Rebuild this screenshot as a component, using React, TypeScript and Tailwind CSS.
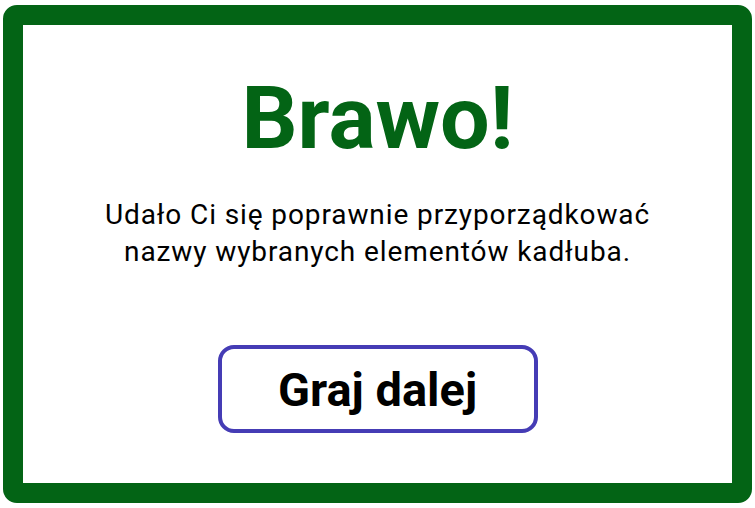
import React from 'react';

function App() {
  return (
    <div className="w-[755px] h-[508px] bg-white pl-[3px] pt-[5px]" style={{ fontFamily: 'Roboto, "Noto Sans", sans-serif' }}>
      <div className="w-[749px] h-[498px] border-[20px] border-[#036415] rounded-[14px] bg-white flex flex-col items-center">
        <h1 className="mt-[49px] text-[88px] leading-[88px] font-bold text-[#036415]">Brawo!</h1>
        <p className="mt-[34px] text-[28px] leading-[37px] tracking-[0.9px] text-black text-center">
          Udało Ci się poprawnie przyporządkować
          <br />
          nazwy wybranych elementów kadłuba.
        </p>
        <button className="mt-[75px] w-[320px] h-[88px] pt-[3px] border-[4px] border-[#453cb5] rounded-[16px] bg-white text-[47px] font-bold text-black">
          Graj dalej
        </button>
      </div>
    </div>
  );
}

export default App;
